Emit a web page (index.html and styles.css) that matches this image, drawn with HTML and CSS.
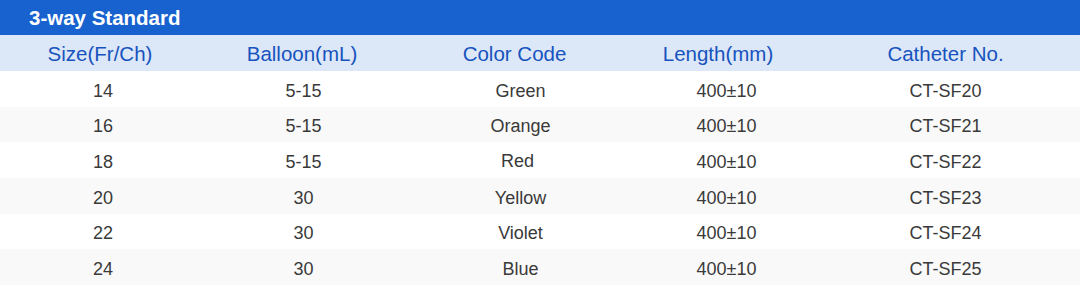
FILE: index.html
```html
<!DOCTYPE html>
<html lang="en">
<head>
<meta charset="utf-8">
<title>3-way Standard</title>
<link rel="stylesheet" href="styles.css">
</head>
<body>
<div class="spec">
  <div class="spec-title">3-way Standard</div>
  <div class="spec-head">
    <div class="cell">Size(Fr/Ch)</div>
    <div class="cell">Balloon(mL)</div>
    <div class="cell">Color Code</div>
    <div class="cell">Length(mm)</div>
    <div class="cell">Catheter No.</div>
  </div>
  <div class="spec-body">
    <div class="row"><div class="cell">14</div><div class="cell">5-15</div><div class="cell">Green</div><div class="cell">400±10</div><div class="cell">CT-SF20</div></div>
    <div class="row alt"><div class="cell">16</div><div class="cell">5-15</div><div class="cell">Orange</div><div class="cell">400±10</div><div class="cell">CT-SF21</div></div>
    <div class="row"><div class="cell">18</div><div class="cell">5-15</div><div class="cell red">Red</div><div class="cell">400±10</div><div class="cell">CT-SF22</div></div>
    <div class="row alt"><div class="cell">20</div><div class="cell">30</div><div class="cell">Yellow</div><div class="cell">400±10</div><div class="cell">CT-SF23</div></div>
    <div class="row"><div class="cell">22</div><div class="cell">30</div><div class="cell">Violet</div><div class="cell">400±10</div><div class="cell">CT-SF24</div></div>
    <div class="row alt"><div class="cell">24</div><div class="cell">30</div><div class="cell">Blue</div><div class="cell">400±10</div><div class="cell">CT-SF25</div></div>
  </div>
</div>
</body>
</html>
```
FILE: styles.css
```css
html, body {
  margin: 0;
  padding: 0;
  background: #ffffff;
}
body {
  font-family: "Liberation Sans", Arial, sans-serif;
  width: 1080px;
  height: 285px;
  overflow: hidden;
}
.spec {
  display: flex;
  flex-direction: column;
  width: 1080px;
}
.spec-title {
  height: 35px;
  background: #1762cf;
  color: #ffffff;
  font-weight: bold;
  font-size: 20.5px;
  line-height: 35px;
  padding-left: 29px;
  box-sizing: border-box;
}
.spec-head,
.row {
  display: grid;
  grid-template-columns: 200px 204px 221px 186px 269px;
  align-items: center;
}
.spec-head {
  height: 36px;
  background: #dce7f7;
  color: #1753be;
  font-size: 20.5px;
}
.spec-head .cell {
  text-align: center;
  padding-top: 1px;
}
.spec-body {
  display: grid;
  grid-template-rows: repeat(6, 1fr);
  height: 214px;
}
.row {
  color: #3a3a3a;
  font-size: 18px;
  background: #ffffff;
}
.row.alt {
  background: #f9f9f9;
}
.row .cell {
  text-align: center;
  padding-top: 5px;
}
.row .cell:nth-child(1) { padding-left: 6px; }
.row .cell:nth-child(2) { padding-left: 3px; }
.row .cell:nth-child(3) { padding-left: 12px; }
.row .cell:nth-child(4) { padding-left: 17px; }
.row .cell.red { padding-left: 6px; padding-top: 2px; }
```
